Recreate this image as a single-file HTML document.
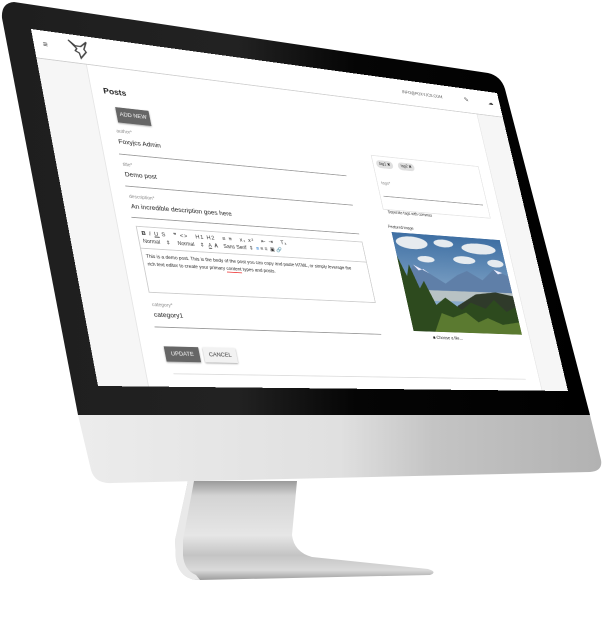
<!DOCTYPE html>
<html><head><meta charset="utf-8"><style>
html,body{margin:0;padding:0;background:#fff;width:603px;height:623px;overflow:hidden;font-family:"Liberation Sans",sans-serif;}
#mon{position:absolute;left:0;top:0}
#scr{position:absolute;left:0;top:0;width:600px;height:400px;background:#fff;transform-origin:0 0;
transform:matrix3d(0.94120,0.13745,0,0.00033105,0.15806,0.85533,0,-0.000096293,0,0,1,0,31,29,0,1);overflow:hidden;color:#333}
.a{position:absolute;white-space:nowrap}
.lbl{font-size:5.5px;color:#888}
.val{font-size:7.5px;color:#222}
.ul{position:absolute;height:1px;background:#999}
.btn{position:absolute;font-size:6.5px;text-align:center;box-shadow:0 1px 2px rgba(0,0,0,.35)}
</style></head><body>
<svg id="mon" width="603" height="623" viewBox="0 0 603 623">
<defs>
<linearGradient id="chin" x1="0" y1="0" x2="1" y2="0"><stop offset="0" stop-color="#ececec"/><stop offset="0.5" stop-color="#e0e0e0"/><stop offset="0.68" stop-color="#c4c4c4"/><stop offset="1" stop-color="#b2b2b2"/></linearGradient>
<linearGradient id="bez" x1="0" y1="0" x2="1" y2="0"><stop offset="0" stop-color="#1e1e1e"/><stop offset="0.4" stop-color="#222"/><stop offset="0.6" stop-color="#050505"/><stop offset="1" stop-color="#000"/></linearGradient>
<linearGradient id="st" x1="0" y1="0" x2="0" y2="1"><stop offset="0" stop-color="#9a9a9a"/><stop offset="0.15" stop-color="#d4d4d4"/><stop offset="0.55" stop-color="#e6e6e6"/><stop offset="0.75" stop-color="#c4c4c4"/><stop offset="0.9" stop-color="#dadada"/><stop offset="1" stop-color="#9c9c9c"/></linearGradient>
</defs>
<path d="M2,18 Q1,3 14,2 L488,73 Q501,76 505,89 L590,415 L78,415 Z" fill="url(#bez)"/>
<path d="M78,415 L590,415 L601,460 Q603,471 590,472 L112,483 Q95,484 91,470 Z" fill="url(#chin)"/>
<path d="M188,481 L297,481 L292,535 Q294,552 312,557 L428,569 Q438,572 430,575 L200,580 Q180,580 176,560 L175,540 Z" fill="url(#st)"/>
<path d="M188,481 L175,540 L176,560 Q180,580 200,580 L196,575 Q184,570 183,555 L183,540 L194,481Z" fill="#e9e9e9"/>
</svg>
<div id="scr">
 <div style="position:absolute;left:0;top:0;width:600px;height:33px;border-bottom:1px solid #ccc;background:#fff"></div>
 <div class="a" style="left:10px;top:11px;font-size:9px;color:#333">&#8801;</div>
 <svg class="a" style="left:36px;top:4px" width="26" height="26" viewBox="0 0 26 26"><path d="M3,3 L10,9 L16,9 L23,3 L19,12 L21,15 L14,23 L13,17 L9,15 L11,12 Z" fill="none" stroke="#444" stroke-width="1.6"/></svg>
 <div class="a" style="left:455px;top:14px;font-size:5.5px;color:#555">INFO@FOXYJCS.COM</div>
 <div class="a" style="left:546px;top:11px;font-size:8px;color:#444">&#9998;</div>
 <div class="a" style="left:582px;top:11px;font-size:8px;color:#444">&#9729;</div>
 <div style="position:absolute;left:0;top:34px;width:54px;height:366px;background:#f6f6f6;border-right:1px solid #e6e6e6"></div>
 <div style="position:absolute;left:560px;top:34px;width:40px;height:366px;background:#f6f6f6;border-left:1px solid #e6e6e6"></div>
 <div class="a" style="left:68px;top:58px;font-size:9.5px;font-weight:bold;color:#222">Posts</div>
 <div class="btn" style="left:78px;top:81px;width:38px;height:18px;line-height:18px;background:#666;color:#fff">ADD NEW</div>
 <div class="a lbl" style="left:74px;top:107px">author*</div>
 <div class="a val" style="left:74px;top:117px">Foxyjcs Admin</div>
 <div class="ul" style="left:72px;top:136px;width:278px"></div>
 <div class="a lbl" style="left:74px;top:146px">title*</div>
 <div class="a val" style="left:74px;top:155px">Demo post</div>
 <div class="ul" style="left:72px;top:173px;width:278px"></div>
 <div class="a lbl" style="left:74px;top:183px">description*</div>
 <div class="a val" style="left:74px;top:192px">An incredible description goes here</div>
 <div class="ul" style="left:72px;top:209px;width:278px"></div>
 <div style="position:absolute;left:75px;top:219px;width:275px;height:74px;border:1px solid #ccc"></div>
 <div style="position:absolute;left:75px;top:244px;width:276px;height:1px;background:#ccc"></div>
 <div class="a" style="left:80px;top:223px;font-size:6.5px;color:#333;letter-spacing:1px"><b>B</b> <i>I</i> <u>U</u> S &nbsp; &#10078; &lt;&gt; &nbsp; H1 H2 &nbsp; &#8801; &#8801; &nbsp; x&#8321; x&#178; &nbsp; &#8676; &#8677; &nbsp; T&#8339;</div>
 <div class="a" style="left:80px;top:233px;font-size:6px;color:#333">Normal &nbsp;&nbsp; &#8661; &nbsp;&nbsp;&nbsp; Normal &nbsp;&nbsp; &#8661; &nbsp; <u>A</u> &nbsp;<b>A</b> &nbsp;&nbsp; Sans Serif &nbsp;&#8661; &nbsp;<span style="color:#06c">&#8801;</span> &#8801; &#8801; &nbsp;&#9635; &#128279;</div>
 <div class="a" style="left:80px;top:250px;font-size:5.5px;color:#222;line-height:9px">This is a demo post. This is the body of the post you can copy and paste HTML, or simply leverage the<br>rich text editor to create your primary <span style="border-bottom:1px solid #e44">content</span> types and posts.</div>
 <div class="a lbl" style="left:76px;top:306px">category*</div>
 <div class="a val" style="left:76px;top:315px">category1</div>
 <div class="ul" style="left:74px;top:333px;width:276px"></div>
 <div class="btn" style="left:80px;top:355px;width:39px;height:17px;line-height:17px;background:#666;color:#fff">UPDATE</div>
 <div class="btn" style="left:124px;top:355px;width:38px;height:17px;line-height:17px;background:#f2f2f2;color:#333">CANCEL</div>
 <div style="position:absolute;left:85px;top:385px;width:455px;height:1px;background:#ddd"></div>
 <div style="position:absolute;left:390px;top:106px;width:152px;height:68px;border:1px solid #e4e4e4"></div>
 <div class="a" style="left:395px;top:112px;font-size:5px;background:#e0e0e0;border-radius:6px;padding:2px 4px">tag1 &#10006;</div>
 <div class="a" style="left:425px;top:112px;font-size:5px;background:#e0e0e0;border-radius:6px;padding:2px 4px">tag2 &#10006;</div>
 <div class="a lbl" style="left:396px;top:139px">tags*</div>
 <div class="ul" style="left:395px;top:158px;width:142px"></div>
 <div class="a" style="left:396px;top:176px;font-size:5px;color:#333">Seperate tags with commas</div>
 <div class="a" style="left:392px;top:195px;font-size:5px;color:#333">Featured image</div>
 <svg class="a" style="left:395px;top:204px" width="155" height="124" viewBox="0 0 155 124" preserveAspectRatio="none">
  <defs><linearGradient id="sky" x1="0" y1="0" x2="0" y2="1"><stop offset="0" stop-color="#3e6fa3"/><stop offset="1" stop-color="#a9c4dc"/></linearGradient></defs>
  <rect width="155" height="124" fill="url(#sky)"/>
  <g fill="#e6ebef"><ellipse cx="25" cy="12" rx="22" ry="8"/><ellipse cx="70" cy="10" rx="14" ry="5"/><ellipse cx="120" cy="14" rx="25" ry="7"/><ellipse cx="95" cy="30" rx="16" ry="5"/><ellipse cx="40" cy="32" rx="12" ry="4"/><ellipse cx="140" cy="32" rx="12" ry="5"/></g>
  <path d="M0,70 L20,40 L40,50 L60,62 L80,50 L95,44 L115,55 L135,40 L155,48 L155,80 L0,80Z" fill="#5f7fa8"/>
  <path d="M20,40 L26,47 L33,45 L40,50Z M135,40 L140,46 L147,44Z" fill="#eef"/>
  <path d="M0,72 L155,70 L155,82 L0,86Z" fill="#b8c2c4"/>
  <path d="M70,90 L100,74 L130,70 L155,74 L155,124 L60,124Z" fill="#2f3a2a"/>
  <path d="M0,124 L0,30 L8,55 L14,40 L22,70 L30,60 L40,90 L55,80 L75,95 L90,85 L110,92 L125,80 L140,95 L155,88 L155,124Z" fill="#2d4a1e"/>
  <path d="M30,124 L45,100 L60,105 L80,98 L95,110 L110,104 L130,112 L155,108 L155,124Z" fill="#5b7a30"/>
 </svg>
 <div class="a" style="left:420px;top:333px;font-size:5.5px;color:#222">&#9632; Choose a file...</div>
</div>
</body></html>
